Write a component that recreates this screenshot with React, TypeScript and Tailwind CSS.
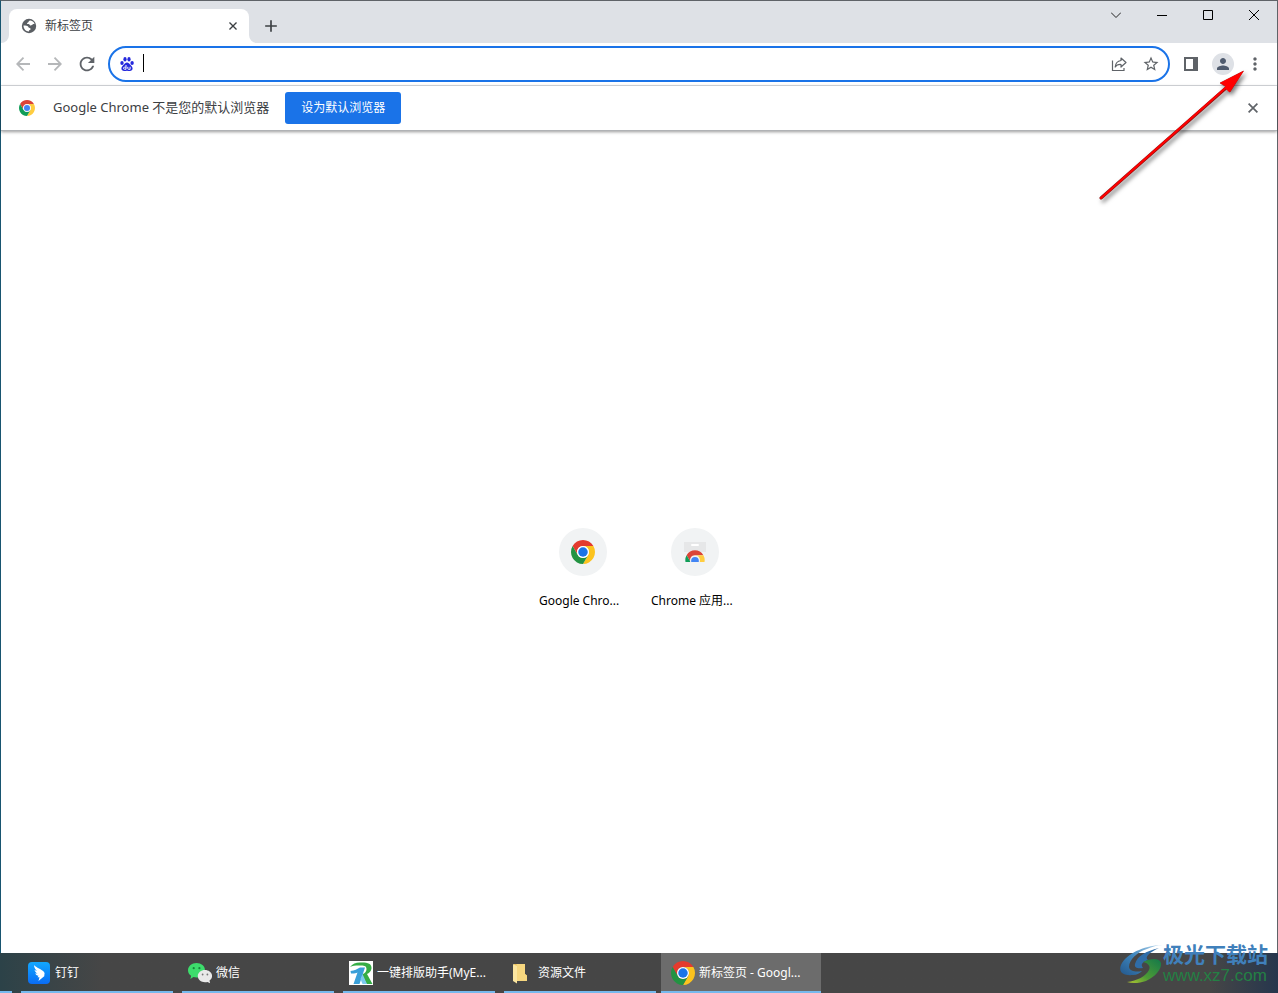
import React from 'react';
import { MdAdd, MdMoreVert, MdPerson, MdRefresh, MdStarBorder } from 'react-icons/md';

interface IconProps {
  className?: string;
}

const ChromeLogo: React.FC<IconProps> = ({ className }) => (
  <svg viewBox="0 0 48 48" className={className} aria-hidden="true">
    <path fill="#e33b2e" d="M3.22 12A24 24 0 0 1 44.78 12H24A12 12 0 0 0 13.61 30Z" />
    <path fill="#fcc31e" d="M44.78 12A24 24 0 0 1 24 48L34.39 30A12 12 0 0 0 24 12Z" />
    <path fill="#229342" d="M24 48A24 24 0 0 1 3.22 12L13.61 30A12 12 0 0 0 34.39 30Z" />
    <circle cx="24" cy="24" r="12" fill="#fff" />
    <circle cx="24" cy="24" r="9.5" fill="#1a73e8" />
  </svg>
);

// Flatter logo of the default-browser bar, with a thin ring round the centre
const ChromeLogoSmall: React.FC<IconProps> = ({ className }) => (
  <svg viewBox="0 0 48 48" className={className} aria-hidden="true">
    <path fill="#db4437" d="M3.22 12A24 24 0 0 1 44.78 12H24A12 12 0 0 0 13.61 30Z" />
    <path fill="#ffcd40" d="M44.78 12A24 24 0 0 1 24 48L34.39 30A12 12 0 0 0 24 12Z" />
    <path fill="#0f9d58" d="M24 48A24 24 0 0 1 3.22 12L13.61 30A12 12 0 0 0 34.39 30Z" />
    <circle cx="24" cy="24" r="11" fill="#f1f1f1" />
    <circle cx="24" cy="24" r="9" fill="#4285f4" />
  </svg>
);

const WebStoreLogo: React.FC<IconProps> = ({ className }) => (
  <svg viewBox="0 0 24 24" className={className} aria-hidden="true">
    <clipPath id="dome">
      <path d="M0 0h24v22H0z" />
    </clipPath>
    <path fill="#e6e7e8" d="M1 2h22v10H1z" />
    <rect x="8" y="4" width="8" height="2" rx="1" fill="#fff" />
    <g clipPath="url(#dome)">
      <g transform="translate(2.300 10.300) scale(.404)">
        <path fill="#db4437" d="M3.220 12A24 24 0 0 1 44.780 12H24A12 12 0 0 0 13.610 30Z" />
        <path fill="#ffcd40" d="M44.780 12A24 24 0 0 1 24 48L34.390 30A12 12 0 0 0 24 12Z" />
        <path fill="#0f9d58" d="M24 48A24 24 0 0 1 3.220 12L13.610 30A12 12 0 0 0 34.390 30Z" />
        <circle cx="24" cy="26" r="12" fill="#f1f1f1" />
        <circle cx="24" cy="26" r="9.500" fill="#4285f4" />
      </g>
    </g>
  </svg>
);

const GlobeIcon: React.FC<IconProps> = ({ className }) => (
  <svg viewBox="0 0 16 16" className={className} aria-hidden="true">
    <circle cx="8" cy="8" r="7.2" fill="#5a5e63" />
    <path fill="#fff" d="M9.500 2.600C8 2.400 7.800 3.600 7.300 4.300c-.4.600-1.200.4-1.300 1.100 0 .6.900.7 1.500.6.900-.1 1 .8 1.500 1.200.7.500 2.100.1 2.700-.6.4-.6 1.200-.6 1.900-.4C13.300 4.500 11.500 2.900 9.500 2.600zM2.500 7.600c1.500-.3 3.200-.2 4.300.6.800.6.500 1.300 1.300 1.600.9.300 1.700.6 1.500 1.500-.2.800-1.300.6-1.600 1.300-.1.400-.1.700 0 .9C4.700 13.400 2.500 11 2.500 7.600z" />
  </svg>
);

const CloseIcon: React.FC<IconProps> = ({ className }) => (
  <svg viewBox="0 0 10 10" className={className} fill="none" stroke="currentColor" strokeWidth="1.700" aria-hidden="true">
    <path d="M.6.6l8.800 8.800M9.400.6L.6 9.400" />
  </svg>
);

const ArrowIcon: React.FC<IconProps> = ({ className }) => (
  <svg viewBox="0 0 14 14" className={className} fill="none" stroke="currentColor" strokeWidth="1.800" aria-hidden="true">
    <path d="M14 7H1.500M7.500.7L1.200 7l6.300 6.300" />
  </svg>
);

const BaiduPaw: React.FC<IconProps> = ({ className }) => (
  <svg viewBox="0 0 16 16" className={className} aria-hidden="true">
    <g fill="#2428dc">
      <ellipse cx="3" cy="7" rx="1.7" ry="2.1" />
      <ellipse cx="6" cy="3.2" rx="1.6" ry="2.2" />
      <ellipse cx="10" cy="3.2" rx="1.6" ry="2.2" />
      <ellipse cx="13.100" cy="7" rx="1.700" ry="2.100" />
      <path d="M8 6.600c1.500 0 2.200 1 3 2 1 1.200 2.600 2 2.600 3.900 0 1.500-1.200 2.500-2.700 2.500-1 0-1.800-.3-2.900-.3s-1.900.3-2.900.3c-1.500 0-2.700-1-2.700-2.500 0-1.900 1.600-2.700 2.600-3.900.8-1 1.500-2 3-2z" />
    </g>
    <path fill="none" stroke="#fff" d="M7 9v4.300M6.800 11.200H5.600c-.9 0-1.100.4-1.100 1s.2 1 1.100 1H7M8.800 10.800v1.700c0 .6.300.8.800.8h1.500v-2.500" />
  </svg>
);

const ShareIcon: React.FC<IconProps> = ({ className }) => (
  <svg viewBox="0 0 16 16" className={className} fill="none" stroke="#5f6368" strokeWidth="1.200" aria-hidden="true">
    <path d="M1.500 4.500v10h11.500V12" />
    <path strokeLinejoin="round" d="M10 2l5 4.500-5 4.500V8.500C7.300 8.300 5.500 9 4.200 11 4.500 7.300 6.500 5 10 4.500z" />
  </svg>
);

const SidePanelIcon: React.FC<IconProps> = ({ className }) => (
  <svg viewBox="0 0 14 14" className={className} aria-hidden="true">
    <path fill="#5f6368" fillRule="evenodd" d="M0 0h14v14H0zM2 2v10h7V2z" />
  </svg>
);

const DingTalkIcon: React.FC<IconProps> = ({ className }) => (
  <svg viewBox="0 0 24 24" className={className} aria-hidden="true">
    <defs>
      <linearGradient id="ding" x1="0" y1="0" x2="0" y2="1">
        <stop offset="0" stopColor="#12a8ff" />
        <stop offset="1" stopColor="#0a6cf5" />
      </linearGradient>
    </defs>
    <rect x="1" y="1" width="22" height="22" rx="4" fill="url(#ding)" />
    <path fill="#fff" d="M7 4c2 2.500 8 4.500 10 7 1 1.300.6 2.500 0 3.500l.8.2L11.500 20l1-3.800h-2l1-1.400c-1.800-.3-2.800-1.200-3.200-2.500l2.300.4C9 11.800 7.900 10.500 7.500 9l2.500.9C8.300 8.300 7 6.500 7 4z" />
  </svg>
);

const WeChatIcon: React.FC<IconProps> = ({ className }) => (
  <svg viewBox="0 0 24 24" className={className} aria-hidden="true">
    <path fill="#3ddc6c" d="M8.500 2C3.800 2 0 5.200 0 9.200c0 2.300 1.200 4.200 3.100 5.500L2.400 18l3-1.900c1 .3 2 .4 3.100.4 4.700 0 8.500-3.200 8.500-7.300S13.200 2 8.500 2z" />
    <circle cx="5.700" cy="7.200" r="1.100" fill="#17853c" />
    <circle cx="11.400" cy="7.200" r="1.100" fill="#17853c" />
    <path fill="#e9e9e9" d="M17 9c-4 0-7.200 2.700-7.200 6.100s3.200 6.200 7.200 6.200c.9 0 1.700-.1 2.500-.4l2.600 1.300-.6-2.600c1.600-1.100 2.600-2.700 2.600-4.500C24.100 11.700 21 9 17 9z" />
    <circle cx="14.600" cy="13.500" r=".9" fill="#777" />
    <circle cx="19.400" cy="13.500" r=".9" fill="#777" />
  </svg>
);

const TypesetIcon: React.FC<IconProps> = ({ className }) => (
  <svg viewBox="0 0 24 24" className={className} aria-hidden="true">
    <path fill="#fff" d="M0 0h24v24H0z" />
    <path fill="#35ad45" d="M1 6C4 2 8 1 13 1.500c6 0 10 1.500 9.500 6-.4 3-2.500 4.500-4.500 5.500l5.500 10H17.500L13 13.500c3-1 4.500-3 4.500-5.500S16 4.500 12 4.500C8 4.300 4 4.500 1 6z" />
    <path fill="#399fd8" d="M1.500 10c4-.5 7-2 9.500-3.500h5L10.500 23H4.500L8.500 11.500c-1.500.8-4 1.300-6.500 1z" />
    <path fill="#7cc9ee" d="M13.500 13L18 23h-4.500L11.500 18z" />
  </svg>
);

const FolderIcon: React.FC<IconProps> = ({ className }) => (
  <svg viewBox="0 0 24 24" className={className} aria-hidden="true">
    <path fill="#e9bd55" d="M4 3h11v10l2 1.500V20H4z" />
    <path fill="#f7d77f" d="M6.500 3H15v10l2 1.500V20H6.500z" />
    <path fill="#fce6a0" d="M3 3L7 5v17.500L3 20z" />
  </svg>
);

const tasks = [
  { label: '钉钉', Icon: DingTalkIcon },
  { label: '微信', Icon: WeChatIcon },
  { label: '一键排版助手(MyE...', Icon: TypesetIcon },
  { label: '资源文件', Icon: FolderIcon },
  { label: '新标签页 - Googl...', Icon: ChromeLogo, active: true },
];

const shortcuts = [
  { label: 'Google Chro...', Icon: ChromeLogo },
  { label: 'Chrome 应用...', Icon: WebStoreLogo },
];

const toolButton = 'flex h-8 w-8 shrink-0 items-center justify-center text-[#5f6368]';
const windowButton = 'flex h-7 w-[46px] items-center justify-center';

const TitleBar = () => (
  <header className="flex h-[42px] justify-between bg-[#dee1e6] pl-2">
    <div className="flex items-end">
      <div className="relative flex h-[34px] w-60 items-center rounded-t-lg bg-white pr-2 pl-3">
        {/* Curved feet of the active tab */}
        <svg viewBox="0 0 8 8" className="absolute bottom-0 -left-2 h-2 w-2">
          <path fill="#fff" d="M8 0v8H0a8 8 0 0 0 8-8z" />
        </svg>
        <svg viewBox="0 0 8 8" className="absolute -right-2 bottom-0 h-2 w-2">
          <path fill="#fff" d="M0 0v8h8a8 8 0 0 1-8-8z" />
        </svg>
        <GlobeIcon className="h-4 w-4" />
        <span className="ml-2 flex-1 text-xs text-[#3c4043]">新标签页</span>
        <button aria-label="关闭标签页" className="flex h-4 w-4 items-center justify-center text-[#3c4043]">
          <CloseIcon className="h-2 w-2" />
        </button>
      </div>
      <button aria-label="打开新的标签页" className="ml-2 flex h-[34px] w-7 items-center justify-center text-[#3c4043]">
        <MdAdd size={20} />
      </button>
    </div>

    <div className="flex">
      <button aria-label="搜索标签页" className={windowButton}>
        <svg viewBox="0 0 10 10" className="h-[10px] w-[10px]" fill="none" stroke="#222">
          <path d="M0 2.500l5 5 5-5" />
        </svg>
      </button>
      <button aria-label="最小化" className={windowButton}>
        <svg viewBox="0 0 10 10" className="h-[10px] w-[10px]"><path d="M0 5h10v1H0z" /></svg>
      </button>
      <button aria-label="最大化" className={windowButton}>
        <svg viewBox="0 0 10 10" className="h-[10px] w-[10px]" fill="none" stroke="#000">
          <path d="M.5.5h9v9h-9z" />
        </svg>
      </button>
      <button aria-label="关闭" className={windowButton}>
        <svg viewBox="0 0 10 10" className="h-[10px] w-[10px]" fill="none" stroke="#000">
          <path d="M0 0l10 10M10 0L0 10" />
        </svg>
      </button>
    </div>
  </header>
);

const Toolbar = () => (
  <div className="flex h-[43px] items-center border-b border-[#dadce0] bg-white px-[6px]">
    <button aria-label="后退" className="flex h-8 w-8 items-center justify-center text-[#b5b7b9]">
      <ArrowIcon className="h-[14px] w-[14px]" />
    </button>
    <button aria-label="前进" className="flex h-8 w-8 items-center justify-center text-[#b5b7b9]">
      <ArrowIcon className="h-[14px] w-[14px] rotate-180" />
    </button>
    <button aria-label="重新加载" className={toolButton}>
      <MdRefresh size={22} />
    </button>

    <div className="mx-[5px] flex h-9 flex-1 items-center rounded-full border-2 border-[#1a73e8] bg-white pr-px pl-[9px]">
      <BaiduPaw className="h-4 w-4 shrink-0" />
      <div className="relative ml-2 flex-1">
        <input aria-label="地址和搜索栏" type="text" className="block h-7 w-full bg-transparent text-sm outline-none" />
        <span className="absolute top-1 left-0 h-[18px] w-px bg-black" />
      </div>
      <button aria-label="分享此页" className={toolButton}>
        <ShareIcon className="h-4 w-4" />
      </button>
      <button aria-label="为此标签页添加书签" className={toolButton}>
        <MdStarBorder size={18} />
      </button>
    </div>

    <button aria-label="侧边栏" className={toolButton}>
      <SidePanelIcon className="h-[14px] w-[14px]" />
    </button>
    <button aria-label="个人资料" className={toolButton}>
      <span className="flex h-[22px] w-[22px] items-center justify-center rounded-full bg-[#dee1e6] text-[#4f5b6e]">
        <MdPerson size={18} />
      </span>
    </button>
    <button aria-label="自定义及控制" className={toolButton}>
      <MdMoreVert size={20} />
    </button>
  </div>
);

const InfoBar = () => (
  <div className="relative flex h-[45px] items-center border-b border-[#b0b2b5] bg-white pr-[19px] pl-[18px] shadow-[0_1px_3px_rgba(0,0,0,0.4)]">
    <ChromeLogoSmall className="h-4 w-4" />
    <p className="ml-[18px] text-[13px] text-[#3c4043]">Google Chrome 不是您的默认浏览器</p>
    <button className="ml-4 h-8 rounded-[3px] bg-[#1a73e8] px-4 text-xs text-white">设为默认浏览器</button>
    <button aria-label="关闭提示" className="ml-auto text-[#5f6368]">
      <CloseIcon className="h-[10px] w-[10px]" />
    </button>
  </div>
);

const Taskbar = () => (
  <footer className="flex h-10 gap-px bg-linear-to-r from-[#2c4248] via-[#464646] via-8% to-[#464646]">
    <div className="flex w-4 items-end">
      <span className="h-[2px] w-3 bg-[#76b9ed]" />
    </div>
    {tasks.map(({ label, Icon, active }) => (
      <button
        key={label}
        className={`relative flex w-40 items-center gap-1 px-[10px] text-xs whitespace-nowrap text-white ${active ? 'bg-[#6c6c6c]' : ''}`}
      >
        <Icon className="h-6 w-6 shrink-0" />
        {label}
        <span className={`absolute bottom-0 h-[2px] bg-[#76b9ed] ${active ? 'inset-x-0' : 'inset-x-1'}`} />
      </button>
    ))}
    <div className="flex-1 bg-linear-to-r from-transparent from-85% to-[#26364d]" />
  </footer>
);

const Watermark = () => (
  <div className="pointer-events-none absolute right-[10px] bottom-[6px] flex items-center">
    <svg viewBox="0 0 48 42" className="-mr-1 h-[42px] w-12" aria-hidden="true">
      <defs>
        <linearGradient id="swoosh" x1="1" y1="0" x2="0" y2="1">
          <stop offset="0" stopColor="#c3def2" />
          <stop offset="0.500" stopColor="#3f88c0" />
          <stop offset="1" stopColor="#24588c" />
        </linearGradient>
        <linearGradient id="leaf" x1="1" y1="0" x2="0" y2="1">
          <stop offset="0" stopColor="#14784a" />
          <stop offset="0.600" stopColor="#4d9a35" />
          <stop offset="1" stopColor="#b6c832" />
        </linearGradient>
      </defs>
      <path fill="url(#swoosh)" d="M44 1C28 1 10 8 3 19c-5 9 1 13 11 12 4 0 7-2 9-4-5 1-12 1-13-4 0-7 8-15 18-18 5-2 10-4 16-4z" />
      <path fill="#2f6da8" d="M40 4C27 7 18 12 16 20c-1 4 3 5 8 4-3-4 0-6 5-8-4-3 2-8 11-12z" />
      <path fill="url(#leaf)" d="M24 18c8-4 17-4 18 1 1 6-6 14-15 18-6 2-13 3-19 1 10-1 19-6 22-12 2-4-1-7-6-8z" />
    </svg>
    <div className="whitespace-nowrap">
      <p className="text-[21px] leading-[22px] font-bold text-[#4080bb]">极光下载站</p>
      <p className="font-['Liberation_Sans'] text-[17px] leading-[22px] text-[#248044]">www.xz7.com</p>
    </div>
  </div>
);

export default function App() {
  return (
    <div className="relative flex min-h-screen flex-col overflow-hidden bg-white font-['Noto_Sans','Noto_Sans_CJK_SC',sans-serif]">
      <div className="flex flex-1 flex-col border-x border-t border-t-[#5f6368] border-r-[#5f6368] border-l-[#185570]">
        <TitleBar />
        <Toolbar />
        <InfoBar />
        <main className="flex flex-1 items-center justify-center pt-[53px]">
          {shortcuts.map(({ label, Icon }) => (
            <a key={label} href="#" className="flex w-28 flex-col items-center px-3">
              <span className="flex h-12 w-12 items-center justify-center rounded-full bg-[#f1f3f4]">
                <Icon className="h-6 w-6" />
              </span>
              <span className="mt-[17px] w-full text-xs whitespace-nowrap text-black">{label}</span>
            </a>
          ))}
        </main>
      </div>
      <Taskbar />
      <Watermark />

      {/* Arrow pointing at the browser menu */}
      <svg viewBox="0 0 160 140" className="pointer-events-none absolute top-[65px] right-[28px] h-[140px] w-[160px] drop-shadow-[2px_3px_2px_rgba(0,0,0,0.5)]" aria-hidden="true">
        <path stroke="#8f1010" strokeWidth="3" strokeLinecap="round" d="M11 133L136 23" />
        <path fill="#ff0000" stroke="#a01010" strokeWidth=".6" d="M153.500 6L130 18l5.500 3.500 4.500 5.500z" />
        <path fill="#ff0000" d="M153.500 6L130 18l7 2-1.500 3.500 4 4z" />
        <path stroke="#ff0000" strokeWidth="2.200" strokeLinecap="round" d="M11 133L140 19" />
      </svg>
    </div>
  );
}
